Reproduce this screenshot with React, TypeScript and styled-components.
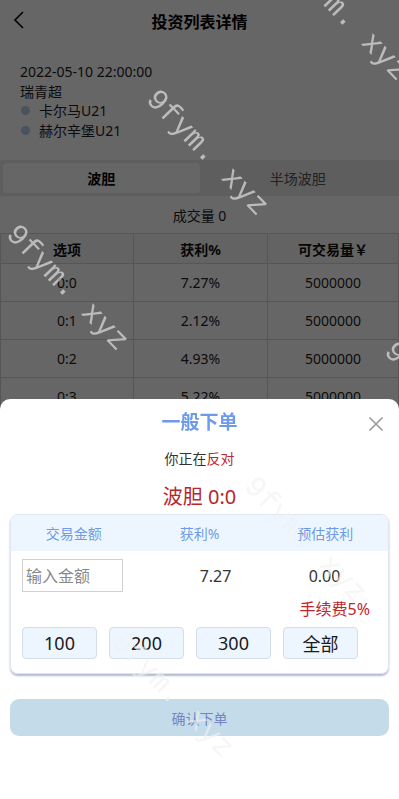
import styled, {createGlobalStyle} from 'styled-components';

const GlobalStyle = createGlobalStyle`
    html, body {
        margin: 0;
        padding: 0;
        background: #ffffff;
    }

    body {
        font-family: "Noto Sans", "Noto Sans CJK SC", sans-serif;
        color: #333333;
        overflow: hidden;
    }
`;

const rows = [
    {option: '0:0', rate: '7.27%', amount: '5000000'},
    {option: '0:1', rate: '2.12%', amount: '5000000'},
    {option: '0:2', rate: '4.93%', amount: '5000000'},
    {option: '0:3', rate: '5.22%', amount: '5000000'},
    {option: '0:4', rate: '3.10%', amount: '5000000'},
];

// 水印位置 (中心点)
const marks = [
    {x: 347, y: 18},
    {x: 207, y: 153},
    {x: 67, y: 288},
    {x: 445, y: 405},
    {x: 305, y: 540},
    {x: 172, y: 695},
];

const App = () => {
    return (
        <>
            <GlobalStyle/>
            <Page>
                <Header>
                    <BackButton>
                        <svg width="14" height="20" viewBox="0 0 14 20">
                            <polyline points="11,2 3,10 11,18" fill="none" stroke="#000" strokeWidth="1.6"/>
                        </svg>
                    </BackButton>
                    <Title>投资列表详情</Title>
                </Header>

                <MatchInfo>
                    <InfoLine>2022-05-10 22:00:00</InfoLine>
                    <InfoLine>瑞青超</InfoLine>
                    <TeamLine><Dot/>卡尔马U21</TeamLine>
                    <TeamLine><Dot/>赫尔辛堡U21</TeamLine>
                </MatchInfo>

                <Tabs>
                    <Tab active>波胆</Tab>
                    <Tab>半场波胆</Tab>
                </Tabs>

                <Volume>成交量 0</Volume>

                <Table>
                    <HeadCell>选项</HeadCell>
                    <HeadCell>获利%</HeadCell>
                    <HeadCell>可交易量￥</HeadCell>
                    {rows.map((row) => (
                        <>
                            <Cell key={row.option + 'a'}>{row.option}</Cell>
                            <Cell key={row.option + 'b'}>{row.rate}</Cell>
                            <Cell key={row.option + 'c'}>{row.amount}</Cell>
                        </>
                    ))}
                </Table>
            </Page>

            <Mask/>

            <Sheet>
                <SheetHeader>
                    <SheetTitle>一般下单</SheetTitle>
                    <CloseButton>
                        <svg width="16" height="16" viewBox="0 0 16 16">
                            <path d="M1.5 1.5 L14.5 14.5 M14.5 1.5 L1.5 14.5" stroke="#999" strokeWidth="1.6"/>
                        </svg>
                    </CloseButton>
                </SheetHeader>

                <Stance>你正在<Red>反对</Red></Stance>
                <Pick>波胆 0:0</Pick>

                <OrderCard>
                    <CardHead>
                        <span>交易金额</span>
                        <span>获利%</span>
                        <span>预估获利</span>
                    </CardHead>
                    <CardRow>
                        <AmountInput placeholder="输入金额"/>
                        <Value>7.27</Value>
                        <Value>0.00</Value>
                    </CardRow>
                    <Fee>手续费5%</Fee>
                    <QuickRow>
                        {['100', '200', '300', '全部'].map((v) => (
                            <QuickButton key={v}>{v}</QuickButton>
                        ))}
                    </QuickRow>
                </OrderCard>

                <ConfirmButton>确认下单</ConfirmButton>
            </Sheet>

            <WatermarkLayer>
                {marks.map((m, i) => (
                    <Watermark key={i} style={{left: m.x, top: m.y}}>9fym. xyz</Watermark>
                ))}
            </WatermarkLayer>
        </>
    );
};

export default App;

// 스타일링
const Page = styled.div`
    width: 399px;
    height: 799px;
    background: #ffffff;
`;

const Header = styled.div`
    height: 42px;
    display: flex;
    align-items: center;
    justify-content: center;
    position: relative;
`;

const BackButton = styled.div`
    position: absolute;
    left: 12px;
    top: 10px;
    display: flex;
`;

const Title = styled.h1`
    margin: 0;
    font-size: 16px;
    font-weight: 700;
    color: #000000;
`;

const MatchInfo = styled.div`
    padding: 20px 20px 0;
    display: flex;
    flex-direction: column;
`;

const InfoLine = styled.div`
    font-size: 14px;
    line-height: 19.5px;
    color: #222222;
`;

const TeamLine = styled(InfoLine)`
    display: flex;
    align-items: center;
    gap: 9px;
`;

const Dot = styled.span`
    width: 9px;
    height: 9px;
    border-radius: 50%;
    background: #b8cdea;
    margin-left: 1px;
`;

const Tabs = styled.div`
    margin-top: 20px;
    height: 36px;
    padding: 3px;
    box-sizing: border-box;
    background: #eaeaea;
    display: flex;
`;

const Tab = styled.div<{ active?: boolean }>`
    flex: 1;
    display: flex;
    align-items: center;
    justify-content: center;
    border-radius: 4px;
    font-size: 14px;
    font-weight: ${(p) => (p.active ? 700 : 400)};
    color: ${(p) => (p.active ? '#000000' : '#555555')};
    background: ${(p) => (p.active ? '#ffffff' : 'transparent')};
`;

const Volume = styled.div`
    height: 37px;
    display: flex;
    align-items: center;
    justify-content: center;
    font-size: 14px;
    color: #222222;
`;

const Table = styled.div`
    display: grid;
    grid-template-columns: 133px 134px 1fr;
    border-top: 1px solid #d8d8d8;
    border-left: 1px solid #d8d8d8;
`;

const HeadCell = styled.div`
    height: 29px;
    display: flex;
    align-items: center;
    justify-content: center;
    font-size: 14px;
    font-weight: 700;
    color: #111111;
    background: #f7f7f7;
    border-right: 1px solid #d8d8d8;
    border-bottom: 1px solid #d8d8d8;
`;

const Cell = styled.div`
    height: 37px;
    display: flex;
    align-items: center;
    justify-content: center;
    font-size: 14px;
    color: #222222;
    border-right: 1px solid #d8d8d8;
    border-bottom: 1px solid #d8d8d8;
`;

const Mask = styled.div`
    position: fixed;
    inset: 0;
    background: rgba(0, 0, 0, 0.6);
`;

const Sheet = styled.div`
    position: fixed;
    left: 0;
    right: 0;
    bottom: 0;
    height: 400px;
    background: #ffffff;
    border-radius: 10px 10px 0 0;
    padding: 0 10px;
    box-sizing: border-box;
    display: flex;
    flex-direction: column;
`;

const SheetHeader = styled.div`
    height: 43px;
    display: flex;
    align-items: center;
    justify-content: center;
    position: relative;
`;

const SheetTitle = styled.h2`
    margin: 0;
    font-size: 19px;
    font-weight: 700;
    color: #6d9be9;
`;

const CloseButton = styled.div`
    position: absolute;
    right: 5px;
    top: 17px;
    display: flex;
`;

const Stance = styled.div`
    margin-top: 7px;
    text-align: center;
    font-size: 14px;
    line-height: 20px;
    color: #333333;
`;

const Red = styled.span`
    color: #c0262c;
`;

const Pick = styled.div`
    margin-top: 15px;
    text-align: center;
    font-size: 20px;
    line-height: 26px;
    color: #b8262a;
`;

const OrderCard = styled.div`
    margin-top: 4px;
    border: 1px solid #e1e6ee;
    border-radius: 8px;
    overflow: hidden;
    box-shadow: 0 2px 2px rgba(80, 100, 160, 0.45);
    padding-bottom: 14px;
`;

const CardHead = styled.div`
    height: 36px;
    background: #edf6fe;
    display: grid;
    grid-template-columns: repeat(3, 1fr);
    align-items: center;
    justify-items: center;
    font-size: 14px;
    color: #6d9be9;
`;

const CardRow = styled.div`
    display: grid;
    grid-template-columns: 139px 109px 109px;
    align-items: center;
    padding: 8px 10px 0 11px;
`;

const AmountInput = styled.input`
    width: 101px;
    height: 33px;
    box-sizing: border-box;
    border: 1px solid #d0d0d0;
    padding: 0 3px;
    font-family: "Noto Sans", "Noto Sans CJK SC", sans-serif;
    font-size: 16px;
    outline: none;

    &::placeholder {
        color: #888888;
    }
`;

const Value = styled.div`
    text-align: center;
    font-size: 16px;
    color: #333333;
`;

const Fee = styled.div`
    text-align: right;
    padding-right: 18px;
    margin-top: 6px;
    font-size: 16px;
    line-height: 22px;
    color: #c0262c;
`;

const QuickRow = styled.div`
    display: flex;
    gap: 12px;
    padding: 0 11px;
    margin-top: 7px;
`;

const QuickButton = styled.div`
    width: 75px;
    height: 32px;
    box-sizing: border-box;
    display: flex;
    align-items: center;
    justify-content: center;
    background: #edf6fe;
    border: 1px solid #d4dde8;
    border-radius: 4px;
    font-size: 18px;
    color: #1a1a1a;
`;

const ConfirmButton = styled.div`
    margin-top: 25px;
    height: 37px;
    border-radius: 9px;
    background: #c4dcea;
    display: flex;
    align-items: center;
    justify-content: center;
    font-size: 14px;
    color: #7486c0;
`;

const WatermarkLayer = styled.div`
    position: fixed;
    inset: 0;
    pointer-events: none;
    overflow: hidden;
`;

const Watermark = styled.div`
    position: absolute;
    transform: translate(-50%, -50%) rotate(46deg);
    font-family: "Liberation Mono", monospace;
    font-size: 30px;
    white-space: nowrap;
    color: rgba(240, 240, 240, 0.62);
`;
